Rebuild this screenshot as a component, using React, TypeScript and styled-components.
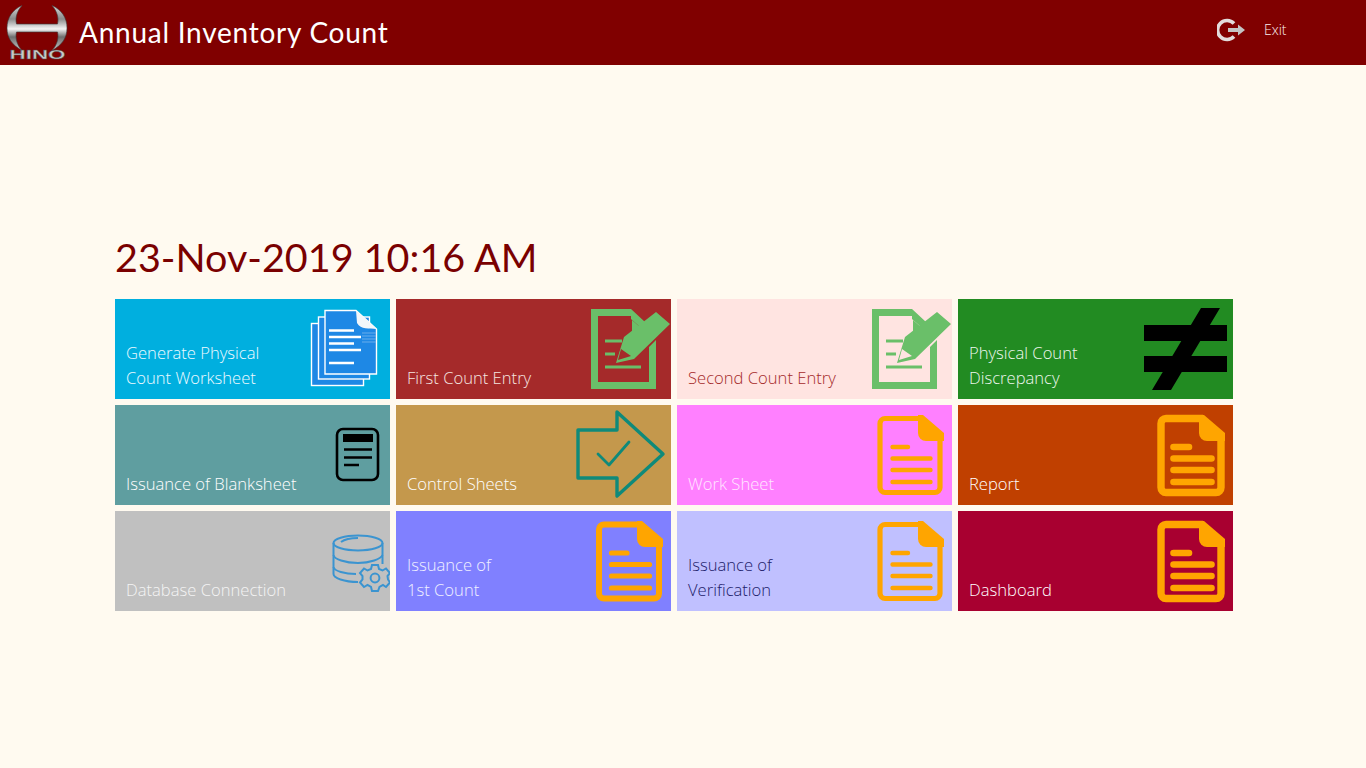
import React from "react";
import styled, { createGlobalStyle } from "styled-components";

const GlobalStyle = createGlobalStyle`
  html, body {
    margin: 0;
    padding: 0;
    background: #fffaf0;
  }
`;

const HinoLogo = () => (
  <LogoSvg viewBox="0 0 75 65">
    <defs>
      <linearGradient id="chrome" x1="0" y1="0" x2="0" y2="1">
        <stop offset="0" stopColor="#d8d8d8" />
        <stop offset="0.3" stopColor="#8a8a8a" />
        <stop offset="0.52" stopColor="#f4f4f4" />
        <stop offset="0.7" stopColor="#6e6e6e" />
        <stop offset="1" stopColor="#c8c8c8" />
      </linearGradient>
    </defs>
    <path
      d="M22 5.5C12 10 7 18 7 28C7 38 12 45 22 50.5C17 45 15 38 16.5 32H57.5C59 38 57 45 52 50.5C62 45 67 38 67 28C67 18 62 10 52 5.5C57 11 59 18 57.5 24H16.5C15 18 17 11 22 5.5Z"
      fill="url(#chrome)"
      stroke="#3a3a3a"
      strokeWidth="0.6"
    />
    <LogoText x="37.5" y="58.5" textLength="56" lengthAdjust="spacingAndGlyphs">
      HINO
    </LogoText>
  </LogoSvg>
);

const ExitIcon = () => (
  <ExitSvg viewBox="0 0 30 24">
    <path d="M17 5.5A9.5 9.5 0 1 0 17 18.5" fill="none" stroke="#e2dcdc" strokeWidth="3.6" />
    <path d="M11 10H21V6.5L28 12L21 17.5V14H11Z" fill="#c4c4c4" />
  </ExitSvg>
);

const StackIcon = () => (
  <IconSvg viewBox="0 0 100 100">
    <g fill="#1e88e5" stroke="#fff" strokeWidth="1.4">
      <rect x="21.5" y="24.5" width="52" height="62" />
      <rect x="28.5" y="18" width="51" height="62" />
      <path d="M35 11.5H66L86.5 30V75H35Z" />
    </g>
    <path d="M66 11.5L86.5 30C79 29 71 31 67 24Z" fill="#f2f6fa" />
    <g stroke="#fff" strokeWidth="2.4">
      <path d="M39 31.5H64M39 38H71M39 44.5H64M39 51H71M39 64H64" />
    </g>
    <path d="M72 34H86M72 37H86M72 40H86M72 43H86" stroke="#7cb8ee" strokeWidth="0.8" />
  </IconSvg>
);

const PencilDocIcon = () => (
  <IconSvg viewBox="0 0 100 100">
    <path fill="#6abf69" d="M20 10H60L74 23L69 28L60 20V17H27V83H78V48L85 41V90H20Z" />
    <path d="M61 21L69 28L61 33Z" fill="#6abf69" />
    <path
      fillRule="evenodd"
      fill="#6abf69"
      d="M85 13L99 25L63 60L45 64L53 38ZM50 50L47 61L60 57Z"
    />
    <path d="M34 42H51M34 55H44M34 68H70" stroke="#6abf69" strokeWidth="3" />
  </IconSvg>
);

const NotEqualIcon = () => (
  <IconSvg viewBox="0 0 100 100">
    <path d="M11 26H94V42H11ZM11 57H94V73H11ZM68 9H87L38 91H19Z" fill="#000" />
  </IconSvg>
);

const BlankSheetIcon = () => (
  <IconSvg viewBox="0 0 100 100">
    <rect x="47" y="24" width="41" height="51" rx="6" fill="none" stroke="#000" strokeWidth="2.6" />
    <rect x="53" y="29" width="30" height="8" fill="#000" />
    <path d="M54 44.5H82M54 52.5H82M54 60H69" stroke="#000" strokeWidth="2.4" />
  </IconSvg>
);

const ArrowCheckIcon = () => (
  <IconSvg viewBox="0 0 100 100">
    <path
      d="M7 25H46V7L92 49L46 91V73H7Z"
      fill="none"
      stroke="#0f8a7a"
      strokeWidth="3.4"
      strokeLinejoin="round"
    />
    <path
      d="M27 49L38 60L58 37"
      fill="none"
      stroke="#0f8a7a"
      strokeWidth="2.8"
      strokeLinecap="round"
      strokeLinejoin="round"
    />
  </IconSvg>
);

const OrangeDocIcon = ({ $weight }: { $weight: number }) => (
  <IconSvg viewBox="0 0 100 100">
    <path
      d="M70 13.5H33A5 5 0 0 0 28 18.5V82.5A5 5 0 0 0 33 87.5H83A5 5 0 0 0 88 82.5V32"
      fill="none"
      stroke="#ffa500"
      strokeWidth={$weight}
    />
    <path d="M66 10H71L92 28V36H74A8 8 0 0 1 66 28Z" fill="#ffa500" />
    <path
      d="M40.5 42H56M40.5 53.5H78.5M40.5 65H78.5M40.5 77H78.5"
      stroke="#ffa500"
      strokeWidth={$weight - 0.8}
      strokeLinecap="round"
    />
  </IconSvg>
);

const DatabaseIcon = () => (
  <IconSvg viewBox="0 0 100 100">
    <g fill="none" stroke="#3b94d0" strokeWidth="2">
      <ellipse cx="68" cy="32" rx="24.5" ry="7.5" />
      <path d="M51 31C55 28 62 27 68 27" />
      <path d="M43.5 32V63C43.5 67 54 71 68 71" />
      <path d="M92.5 32V53" />
      <path d="M43.5 44C44 48 55 52 68 52C80 52 91 48 92.5 44" />
      <path d="M43.5 56C44 60 55 63 66 63" />
      <circle cx="85" cy="67" r="4.4" />
      <path d="M82 54L88 54L89 58L92.5 59.5L96 57.5L100 62L97.5 65L98 68.5L100 71.5L96 76L93 74L89.5 76L88 80H82L81 76L77.5 74L74 76L70 71.5L72.5 68.5L72.5 65L70 62L74 57.5L77.5 59.5L81 58Z" />
    </g>
  </IconSvg>
);

const tiles: {
  lines: string[];
  bg: string;
  color: string;
  icon: React.ReactNode;
}[] = [
  { lines: ["Generate Physical", "Count Worksheet"], bg: "#00afdf", color: "#eefaff", icon: <StackIcon /> },
  { lines: ["First Count Entry"], bg: "#a52a2a", color: "#f6e6e0", icon: <PencilDocIcon /> },
  { lines: ["Second Count Entry"], bg: "#ffe4e1", color: "#a52a2a", icon: <PencilDocIcon /> },
  { lines: ["Physical Count", "Discrepancy"], bg: "#228b22", color: "#eef7ee", icon: <NotEqualIcon /> },
  { lines: ["Issuance of Blanksheet"], bg: "#5f9ea0", color: "#fff", icon: <BlankSheetIcon /> },
  { lines: ["Control Sheets"], bg: "#c4984c", color: "#fff", icon: <ArrowCheckIcon /> },
  { lines: ["Work Sheet"], bg: "#ff80ff", color: "#ffe6ff", icon: <OrangeDocIcon $weight={5.2} /> },
  { lines: ["Report"], bg: "#c04000", color: "#fff", icon: <OrangeDocIcon $weight={7.4} /> },
  { lines: ["Database Connection"], bg: "#c0c0c0", color: "#f4f4f4", icon: <DatabaseIcon /> },
  { lines: ["Issuance of", "1st Count"], bg: "#8080ff", color: "#f0f0ff", icon: <OrangeDocIcon $weight={6} /> },
  { lines: ["Issuance of", "Verification"], bg: "#c0c0ff", color: "#20206a", icon: <OrangeDocIcon $weight={5.2} /> },
  { lines: ["Dashboard"], bg: "#a80030", color: "#fff", icon: <OrangeDocIcon $weight={7.4} /> },
];

export default function App() {
  return (
    <Page>
      <GlobalStyle />
      <Header>
        <Brand>
          <HinoLogo />
          <Title>Annual Inventory Count</Title>
        </Brand>
        <ExitButton>
          <ExitIcon />
          <ExitLabel>Exit</ExitLabel>
        </ExitButton>
      </Header>
      <Main>
        <DateLine>23-Nov-2019 10:16 AM</DateLine>
        <TileGrid>
          {tiles.map((tile) => (
            <Tile key={tile.lines.join(" ")} $bg={tile.bg} $color={tile.color}>
              {tile.icon}
              <TileLabel>
                {tile.lines.map((line) => (
                  <div key={line}>{line}</div>
                ))}
              </TileLabel>
            </Tile>
          ))}
        </TileGrid>
      </Main>
    </Page>
  );
}

const Page = styled.div`
  min-height: 100vh;
  background: #fffaf0;
`;

const Header = styled.header`
  display: flex;
  justify-content: space-between;
  height: 65px;
  background: #800000;
`;

const Brand = styled.div`
  display: flex;
  align-items: center;
`;

const LogoSvg = styled.svg`
  width: 75px;
  height: 65px;
`;

const LogoText = styled.text`
  font-family: "Liberation Sans", sans-serif;
  font-size: 13.5px;
  font-weight: 700;
  fill: #c8c8c8;
  stroke: #4a4a4a;
  stroke-width: 0.4px;
  text-anchor: middle;
`;

const Title = styled.h1`
  margin: -2px 0 0 4px;
  font-family: "Lato", sans-serif;
  font-size: 28px;
  font-weight: 400;
  letter-spacing: 0.75px;
  color: #fff;
  white-space: nowrap;
`;

const ExitButton = styled.div`
  display: flex;
  align-items: center;
  gap: 17px;
  width: 149px;
  height: 60px;
`;

const ExitSvg = styled.svg`
  width: 30px;
  height: 24px;
`;

const ExitLabel = styled.span`
  margin-top: -2px;
  font-family: "Open Sans", sans-serif;
  font-size: 14px;
  font-weight: 300;
  color: #fbeeee;
`;

const Main = styled.main`
  padding: 164px 133px 0 115px;
`;

const DateLine = styled.div`
  margin-bottom: 14px;
  font-family: "Lato", sans-serif;
  font-size: 39.5px;
  line-height: 56px;
  color: #7a0000;
  white-space: nowrap;
`;

const TileGrid = styled.div`
  display: grid;
  grid-template-columns: repeat(4, 275px);
  grid-auto-rows: 100px;
  gap: 6px;
`;

const Tile = styled.div<{ $bg: string; $color: string }>`
  position: relative;
  display: flex;
  align-items: flex-end;
  padding: 0 11px 9px;
  background: ${({ $bg }) => $bg};
  color: ${({ $color }) => $color};
`;

const TileLabel = styled.div`
  font-family: "Open Sans", sans-serif;
  font-size: 16.6px;
  font-weight: 300;
  line-height: 25px;
`;

const IconSvg = styled.svg`
  position: absolute;
  top: 0;
  right: 0;
  width: 100px;
  height: 100px;
`;
